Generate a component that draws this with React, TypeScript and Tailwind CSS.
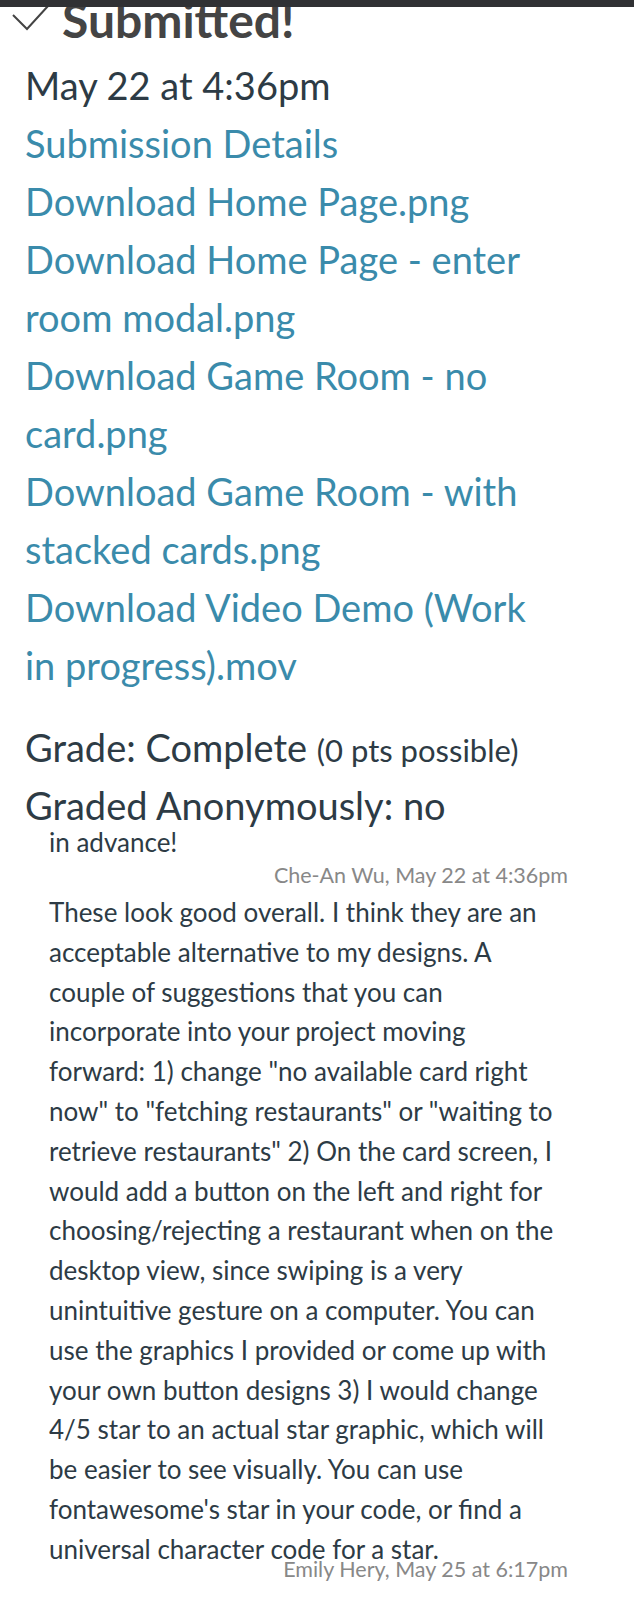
import React from "react";

const links = [
  "Submission Details",
  "Download Home Page.png",
  "Download Home Page - enter room modal.png",
  "Download Game Room - no card.png",
  "Download Game Room - with stacked cards.png",
  "Download Video Demo (Work in progress).mov",
];

const comment =
  "These look good overall. I think they are an acceptable alternative to my designs. A couple of suggestions that you can incorporate into your project moving forward: 1) change \"no available card right now\" to \"fetching restaurants\" or \"waiting to retrieve restaurants\" 2) On the card screen, I would add a button on the left and right for choosing/rejecting a restaurant when on the desktop view, since swiping is a very unintuitive gesture on a computer. You can use the graphics I provided or come up with your own button designs 3) I would change 4/5 star to an actual star graphic, which will be easier to see visually. You can use fontawesome's star in your code, or find a universal character code for a star.";

export default function App() {
  return (
    <div className="w-[634px] min-h-[1604px] bg-white overflow-hidden font-['Lato','Liberation_Sans',sans-serif] text-[#2d3b45]">
      <div className="relative z-10 h-[7px] bg-[#303134]" />

      {/* submission header */}
      <div className="flex items-start h-[48px] mt-[-7px] pl-[12px]">
        <svg width="37" height="26" viewBox="0 0 37 26" className="text-[#444] mt-[5px] shrink-0">
          <path d="M1 10 L15 24 L36 1" fill="none" stroke="currentColor" strokeWidth="2" />
        </svg>
        <span className="ml-[13px] mt-[-4px] text-[48px] font-bold leading-none text-[#444]">Submitted!</span>
      </div>

      <div className="pl-[25px] pr-[90px] mt-[8px]">
        <div className="text-[38px] leading-[58px]">May 22 at 4:36pm</div>
        {links.map((l) => (
          <a key={l} href="#" className="block text-[38px] leading-[58px] text-[#3a8bab]">
            {l}
          </a>
        ))}
      </div>

      <div className="pl-[25px] mt-[24px]">
        <div className="text-[38px] leading-[58px]">
          Grade: Complete <span className="text-[31px]">(0 pts possible)</span>
        </div>
        <div className="text-[38px] leading-[58px] mt-[-3px]">Graded Anonymously: no</div>
      </div>

      {/* comments */}
      <div className="pl-[49px] pr-[66px] mt-[-9px]">
        <p className="text-[26px] leading-[34px]">in advance!</p>
        <p className="text-right text-[21.5px] leading-[32px] text-[#888]">Che-An Wu, May 22 at 4:36pm</p>
        <p className="text-[26px] leading-[39.8px] mt-[2px]">{comment}</p>
        <p className="text-right text-[21.5px] leading-[30px] text-[#888] mt-[-16px]">Emily Hery, May 25 at 6:17pm</p>
      </div>
    </div>
  );
}
